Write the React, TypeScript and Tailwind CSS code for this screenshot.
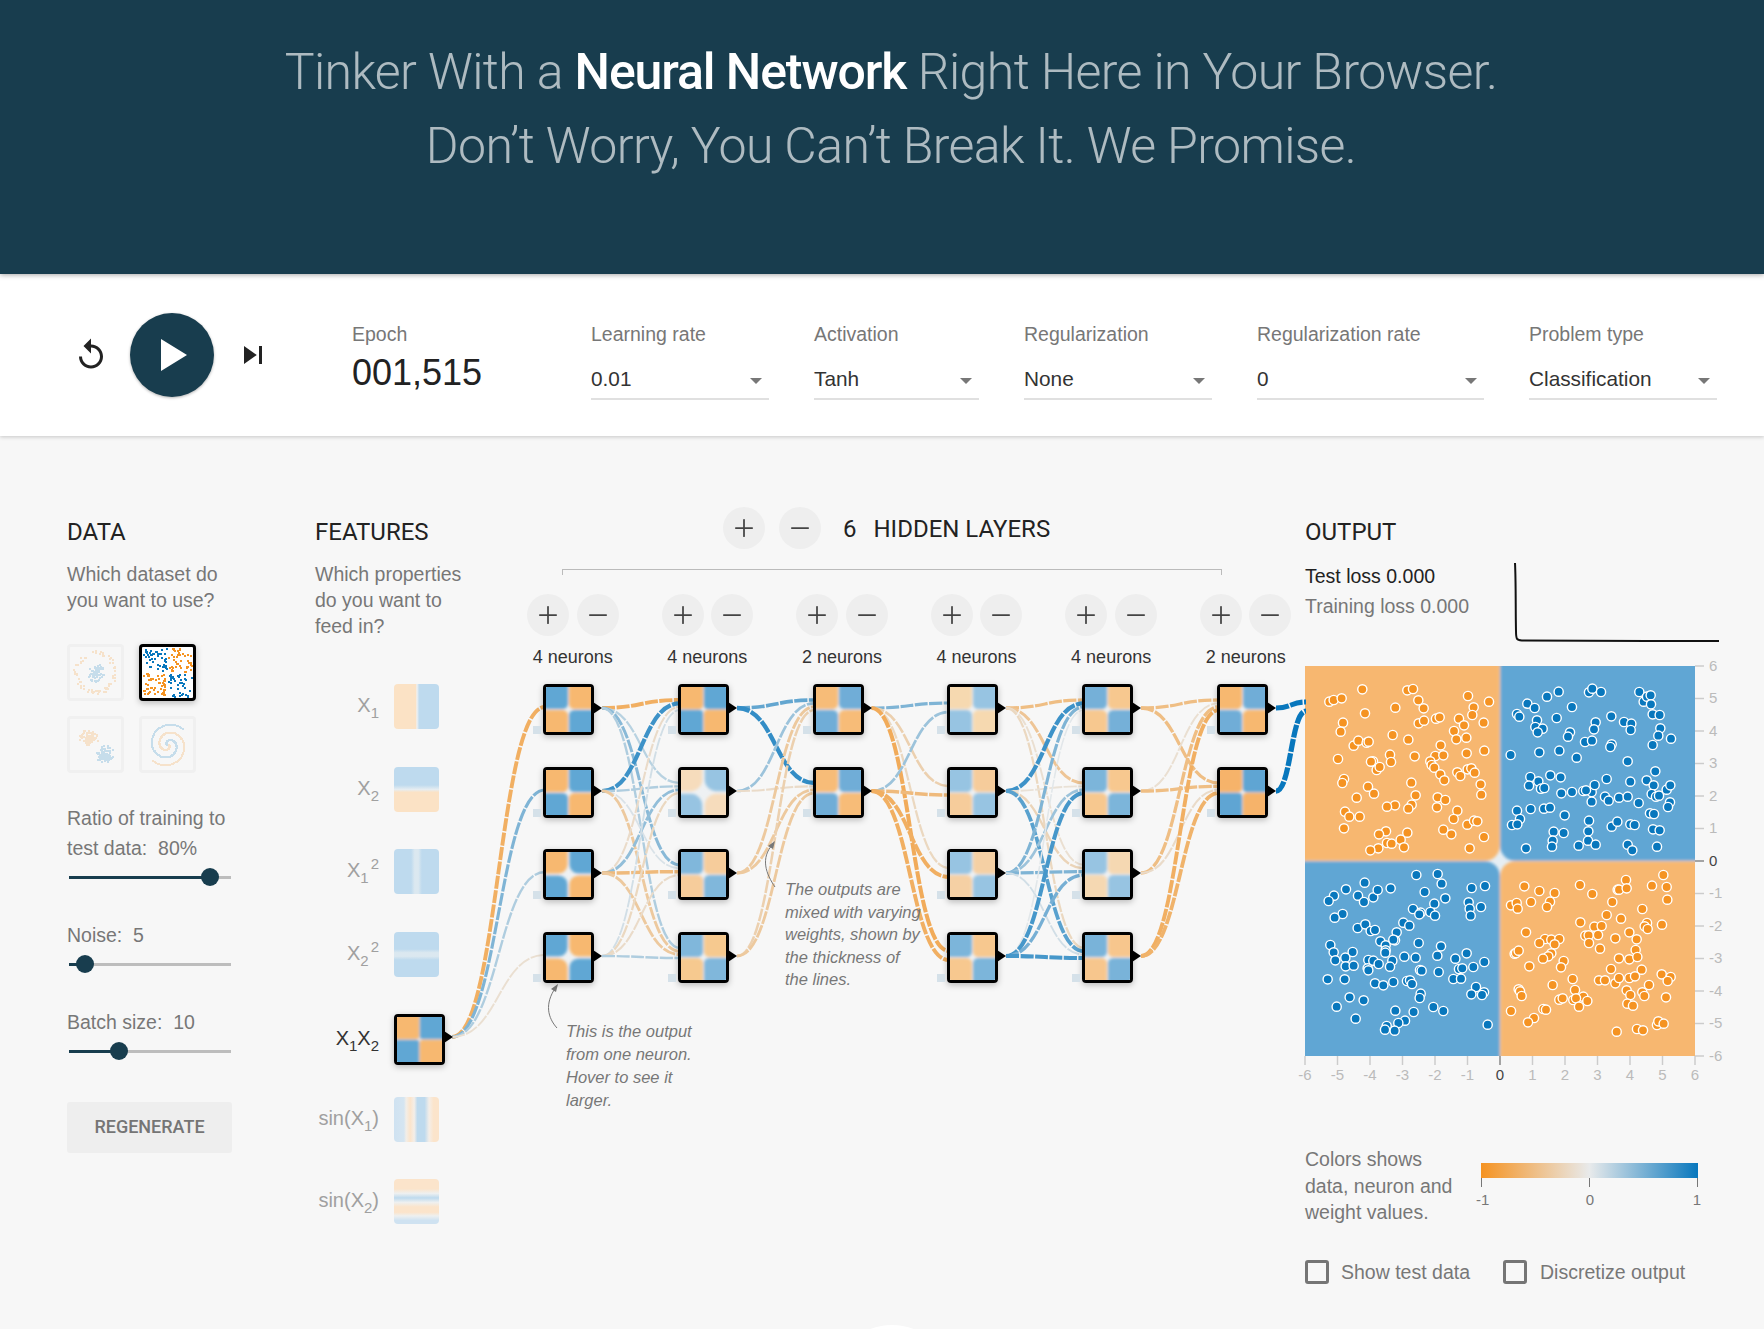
import { Plus, Minus } from 'lucide-react'

const ORANGE = '#f59322'
const BLUE = '#0877bd'
const PALE = '#e8eaeb'

const COL_X = [543, 678, 812.5, 947, 1082, 1217]
const ROW_Y = [684, 767, 849, 932]
const DIAGRAM_X = 315
const DIAGRAM_Y = 670

type Link = [number, number, number]

// signed weights read off the picture: minus is orange, plus is blue
const LINKS: Link[][] = [
  [[0, 0, -0.8], [0, 1, 0.25], [0, 2, 0.5], [0, 3, 0.3], [1, 0, 0.9], [1, 1, 0.3], [1, 2, 0.08], [1, 3, -0.45], [2, 0, -0.2], [2, 1, 0.45], [2, 2, -0.65], [2, 3, -0.45], [3, 0, 0.12], [3, 1, -0.25], [3, 2, -0.2], [3, 3, 0.3]],
  [[0, 0, 0.7], [0, 1, 0.95], [1, 0, 0.4], [1, 1, -0.2], [2, 0, -0.45], [2, 1, -0.45], [3, 0, -0.35], [3, 1, -0.45]],
  [[0, 0, 0.55], [0, 1, -0.35], [0, 2, -0.25], [0, 3, -0.85], [1, 0, 0.4], [1, 1, -0.65], [1, 2, -0.8], [1, 3, -0.8]],
  [[0, 0, -0.6], [0, 1, -0.5], [0, 2, -0.15], [0, 3, -0.25], [1, 0, 0.9], [1, 1, -0.12], [1, 2, -0.3], [1, 3, 0.75], [2, 0, 0.55], [2, 1, 0.4], [2, 2, 0.55], [2, 3, 0.12], [3, 0, 0.03], [3, 1, 0.85], [3, 2, 0.6], [3, 3, 0.85]],
  [[0, 0, -0.6], [0, 1, -0.6], [1, 0, -0.15], [1, 1, -0.6], [2, 0, -0.6], [2, 1, -0.2], [3, 0, -0.8], [3, 1, -0.75]],
]

const INPUT_LINKS = [-0.8, 0.55, 0.3, -0.15]

// first and second quadrant colour of every neuron, column by column
const NEURONS: [string, string, number][][] = [
  [['#61a7d4', '#f7b86f', 1.5], ['#f7b86f', '#61a7d4', 1.5], ['#f7b86f', '#61a7d4', 3], ['#61a7d4', '#f7b86f', 3]],
  [['#f7b86f', '#61a7d4', 1], ['#f6dcbc', '#97c4e2', 4], ['#80b7db', '#f6cc9b', 1.5], ['#80b7db', '#f6c98f', 1.5]],
  [['#f7bc78', '#6fadd7', 1.5], ['#f7bc78', '#6fadd7', 1.5]],
  [['#f6d9b0', '#97c4e2', 1.5], ['#97c4e2', '#f6cc9b', 1.5], ['#97c4e2', '#f5d0a4', 1.5], ['#7cb5da', '#f7c88f', 1.5]],
  [['#74b0d8', '#f7c88f', 1.5], ['#7cb5da', '#f7c88f', 1.5], ['#97c4e2', '#f5d8b2', 1.5], ['#79b3d9', '#f7c68d', 1.5]],
  [['#f7b86f', '#6fadd7', 1.5], ['#f6b36b', '#5fa5d3', 1]],
]

const LAYER_SIZES = ['4 neurons', '4 neurons', '2 neurons', '4 neurons', '4 neurons', '2 neurons']

const SELECTS = [
  { label: 'Learning rate', value: '0.01', width: 'w-[178px]' },
  { label: 'Activation', value: 'Tanh', width: 'w-[165px]' },
  { label: 'Regularization', value: 'None', width: 'w-[188px]' },
  { label: 'Regularization rate', value: '0', width: 'w-[227px]' },
  { label: 'Problem type', value: 'Classification', width: 'w-[188px]' },
]

// dots of the output plot, one list per quadrant, measured in 3x crop pixels of that quadrant
const DOTS_TL = [[148,605],[161,600],[185,595],[247,568],[255,640],[189,668],[182,695],[346,623],[382,571],[399,567],[415,601],[431,625],[416,670],[432,662],[468,656],[479,652],[564,588],[581,622],[627,605],[577,645],[537,656],[552,676],[611,668],[522,693],[529,718],[559,713],[338,705],[385,719],[221,737],[235,722],[260,728],[266,725],[482,736],[174,777],[279,784],[273,785],[330,764],[333,786],[404,769],[466,768],[490,766],[451,784],[455,795],[463,803],[560,760],[613,752],[532,817],[541,828],[563,808],[574,805],[584,818],[290,810],[299,801],[192,837],[187,849],[481,823],[493,841],[394,848],[264,860],[282,881],[602,853],[604,884],[230,893],[407,886],[473,892],[496,900],[345,916],[321,920],[395,914],[385,926],[471,922],[195,935],[208,950],[239,950],[532,932],[521,957],[562,974],[582,962],[592,964],[192,985],[490,989],[514,1003],[612,1011],[382,998],[318,994],[297,1003],[362,1019],[321,1029],[335,1031],[372,1042],[295,1045],[271,1051],[569,1045]]
const DOTS_TR = [[711,642],[718,650],[742,611],[764,624],[801,590],[836,575],[876,621],[830,654],[771,661],[766,681],[788,686],[773,697],[870,697],[864,710],[947,667],[942,688],[915,726],[936,722],[927,577],[937,566],[963,576],[994,649],[1032,666],[1054,671],[1052,690],[1078,576],[1091,605],[1101,590],[1112,586],[1113,613],[1118,643],[1139,645],[1141,685],[1135,707],[1173,716],[1118,735],[995,733],[991,741],[692,765],[778,757],[838,752],[890,773],[1043,784],[1126,814],[751,831],[811,826],[842,832],[747,857],[775,844],[783,866],[793,864],[844,880],[876,876],[910,873],[935,876],[944,855],[918,871],[980,837],[1051,845],[1100,841],[1121,856],[1115,882],[1128,890],[1137,887],[1160,869],[1171,856],[975,890],[986,902],[1017,893],[1043,890],[1076,909],[935,905],[1170,907],[1164,921],[711,932],[752,927],[792,926],[810,923],[854,946],[720,957],[696,975],[712,973],[927,962],[995,980],[1012,965],[1051,973],[1064,975],[1110,940],[1122,942],[1119,988],[1139,991],[821,995],[851,999],[925,994],[818,1022],[816,1040],[924,1022],[947,1034],[896,1037],[738,1045],[1043,1034],[1057,1051],[1131,1040]]
const DOTS_BL = [[334,42],[398,39],[410,68],[179,65],[123,85],[87,104],[71,120],[159,104],[177,123],[205,109],[218,87],[257,82],[359,93],[421,112],[500,81],[540,75],[491,124],[494,143],[528,138],[497,164],[388,128],[324,144],[347,155],[343,160],[376,153],[390,164],[113,159],[89,170],[158,201],[181,190],[197,210],[210,207],[295,185],[313,194],[275,214],[226,241],[270,238],[265,236],[341,246],[76,252],[86,274],[143,273],[242,253],[242,268],[241,275],[408,256],[485,277],[91,298],[121,290],[122,316],[146,314],[190,297],[205,299],[188,322],[190,328],[221,309],[262,299],[255,317],[298,287],[332,290],[397,284],[451,293],[538,303],[505,318],[462,324],[472,322],[345,327],[350,329],[401,333],[68,355],[119,355],[210,367],[235,373],[265,363],[306,360],[315,358],[321,369],[445,354],[468,353],[513,378],[537,394],[499,400],[531,402],[134,409],[176,418],[347,398],[344,411],[95,437],[271,449],[326,453],[385,438],[415,450],[152,473],[300,479],[280,486],[245,495],[240,506],[269,509],[548,491]]
const DOTS_BR = [[73,76],[118,90],[164,96],[240,72],[277,99],[378,57],[490,42],[456,74],[500,78],[353,86],[357,86],[380,82],[502,116],[337,123],[93,123],[150,122],[141,138],[33,133],[50,126],[53,143],[427,144],[320,162],[363,173],[241,184],[283,197],[305,195],[441,186],[434,196],[443,204],[486,191],[78,214],[388,214],[256,224],[266,223],[294,222],[346,232],[410,235],[135,234],[154,236],[178,234],[118,246],[164,250],[267,246],[300,263],[407,267],[44,278],[48,276],[56,269],[154,277],[145,286],[129,293],[357,292],[388,295],[412,288],[191,300],[183,319],[88,316],[333,324],[425,326],[485,340],[512,348],[503,360],[218,354],[297,358],[315,358],[346,367],[357,351],[388,351],[405,346],[447,372],[158,372],[56,385],[60,391],[65,405],[225,387],[380,388],[427,394],[391,402],[433,405],[498,409],[178,416],[188,412],[220,417],[250,407],[228,412],[262,420],[237,437],[382,428],[399,434],[33,450],[130,444],[138,446],[102,471],[84,484],[471,492],[475,481],[491,488],[350,512],[411,504],[429,508]]

function mix(a: string, b: string, t: number) {
  const ch = (c: string, i: number) => parseInt(c.slice(1 + i * 2, 3 + i * 2), 16)
  const v = [0, 1, 2].map((i) => Math.round(ch(a, i) + (ch(b, i) - ch(a, i)) * t))
  return `rgb(${v[0]},${v[1]},${v[2]})`
}

function rng(seed: number) {
  let s = seed
  return () => {
    s = (s + 0x6d2b79f5) | 0
    let t = Math.imul(s ^ (s >>> 15), 1 | s)
    t = (t + Math.imul(t ^ (t >>> 7), 61 | t)) ^ t
    return ((t ^ (t >>> 14)) >>> 0) / 4294967296
  }
}

function Wire({ sx, sy, tx, ty, w }: { sx: number; sy: number; tx: number; ty: number; w: number }) {
  const mx = (sx + tx) / 2
  return (
    <path
      d={`M${sx} ${sy}C${mx} ${sy} ${mx} ${ty} ${tx} ${ty}`}
      fill="none"
      stroke={mix(PALE, w < 0 ? ORANGE : BLUE, Math.min(1, Math.abs(w) * 0.85))}
      strokeWidth={1.5 + Math.abs(w) * 3}
      strokeDasharray="13 1.5"
    />
  )
}

function Heat({ a, b, spread = 1.5 }: { a: string; b: string; spread?: number }) {
  const size = 44
  const c = size / 2
  const gap = spread * 0.3
  const rx = 1.5 + spread * 2.5
  return (
    <svg viewBox={`0 0 ${size} ${size}`} className="block w-full h-full">
      <rect width={size} height={size} fill="#eef1f3" />
      <g filter="url(#soft)">
        <rect x={-size} y={-size} width={size + c - gap} height={size + c - gap} rx={rx} fill={a} />
        <rect x={c + gap} y={-size} width={size} height={size + c - gap} rx={rx} fill={b} />
        <rect x={-size} y={c + gap} width={size + c - gap} height={size} rx={rx} fill={b} />
        <rect x={c + gap} y={c + gap} width={size} height={size} rx={rx} fill={a} />
      </g>
    </svg>
  )
}

function Neuron({ x, y, a, b, spread }: { x: number; y: number; a: string; b: string; spread: number }) {
  return (
    <div className="absolute" style={{ left: x - DIAGRAM_X, top: y - DIAGRAM_Y }}>
      <div className="absolute left-[-10px] top-[42px] w-[8px] h-[8px] bg-[#d5e1e9]" />
      <div className="w-[51px] h-[51px] border-[3px] border-black rounded-[4px] overflow-hidden shadow-[0_2px_6px_rgba(0,0,0,0.25)]">
        <Heat a={a} b={b} spread={spread} />
      </div>
      <div className="absolute left-[50px] top-[18px] w-0 h-0 border-y-[6px] border-y-transparent border-l-[9px] border-l-black" />
    </div>
  )
}

function PointSquares({ seed, kind, opacity }: { seed: number; kind: 'circle' | 'xor' | 'gauss' | 'spiral'; opacity: number }) {
  const r = rng(seed)
  const pts: [number, number, string][] = []
  if (kind === 'xor') {
    for (let i = 0; i < 200; i++) {
      const x = r() * 48 + 1
      const y = r() * 48 + 1
      if (Math.abs(x - 25) < 1 || Math.abs(y - 25) < 1) continue
      pts.push([x, y, x < 25 === y < 25 ? BLUE : ORANGE])
    }
  }
  if (kind === 'circle') {
    for (let i = 0; i < 70; i++) {
      const t = r() * 6.28
      const d = r() * 9
      pts.push([25 + Math.cos(t) * d, 25 + Math.sin(t) * d, BLUE])
      const t2 = r() * 6.28
      const d2 = 17 + r() * 5
      pts.push([25 + Math.cos(t2) * d2, 25 + Math.sin(t2) * d2, ORANGE])
    }
  }
  if (kind === 'gauss') {
    for (let i = 0; i < 90; i++) {
      const g = () => (r() + r() + r() - 1.5) * 7
      pts.push([18 + g(), 18 + g(), ORANGE])
      pts.push([34 + g(), 35 + g(), BLUE])
    }
  }
  if (kind === 'spiral') {
    for (let i = 0; i < 110; i++) {
      const t = (i / 110) * 8.4
      const d = (i / 110) * 21 + 1
      pts.push([25 + Math.cos(t + 3.4) * d, 25 + Math.sin(t + 3.4) * d, BLUE])
      pts.push([25 - Math.cos(t + 3.4) * d, 25 - Math.sin(t + 3.4) * d, ORANGE])
    }
  }
  return (
    <svg viewBox="0 0 51 51" className="block w-full h-full" style={{ opacity }}>
      {pts.map(([x, y, c], i) => (
        <rect key={i} x={Math.round(x)} y={Math.round(y)} width={2} height={2} fill={c} />
      ))}
    </svg>
  )
}

function Slider({ label, at, fillTo }: { label: React.ReactNode; at: number; fillTo: number }) {
  return (
    <div>
      <p className="text-[19.5px] leading-[30px] text-[#777]">{label}</p>
      <div className="relative mt-[5px] ml-[2px] w-[162px] h-[18px]">
        <div className="absolute left-0 right-0 top-[7.5px] h-[3px] bg-[#bdbdbd]" />
        <div className="absolute left-0 top-[7.5px] h-[3px] bg-[#183d4e]" style={{ width: fillTo }} />
        <div className="absolute top-0 w-[18px] h-[18px] rounded-full bg-[#183d4e]" style={{ left: at - 9 }} />
      </div>
    </div>
  )
}

function RoundButton({ minus }: { minus?: boolean }) {
  return (
    <div className="w-[42px] h-[42px] rounded-full bg-[#eeeeee] flex items-center justify-center text-[#444]">
      {minus ? <Minus size={28} strokeWidth={1.5} /> : <Plus size={28} strokeWidth={1.5} />}
    </div>
  )
}

function Select({ label, value, width }: { label: string; value: string; width: string }) {
  return (
    <div className={width}>
      <p className="text-[19.5px] leading-[26px] text-[#777]">{label}</p>
      <div className="relative pt-[19px] pb-[6px] border-b-2 border-[#e0e0e0] text-[20.8px] leading-[26px] text-[#333]">
        {value}
        <div className="absolute right-[7px] top-[31px] w-0 h-0 border-x-[6px] border-x-transparent border-t-[6px] border-t-[#777]" />
      </div>
    </div>
  )
}

function Toolbar() {
  return (
    <div className="relative z-10 h-[162px] bg-white shadow-[0_1px_4px_rgba(0,0,0,0.2)] flex pl-[73px] pt-[47px]">
      <div className="flex items-center h-[68px] gap-[21px]">
        <svg viewBox="0 0 24 24" className="w-[36px] h-[36px] fill-[#222]">
          <path d="M12 5V1L7 6l5 5V7c3.31 0 6 2.69 6 6s-2.69 6-6 6-6-2.69-6-6H4c0 4.42 3.58 8 8 8s8-3.58 8-8-3.58-8-8-8z" />
        </svg>
        <div className="w-[84px] h-[84px] rounded-full bg-[#183d4e] shadow-[0_1px_3px_rgba(0,0,0,0.3)] flex items-center justify-center">
          <svg viewBox="0 0 26 32" className="w-[26px] h-[32px] ml-[3px] fill-white">
            <path d="M0 0L26 16L0 32z" />
          </svg>
        </div>
        <svg viewBox="0 0 24 24" className="w-[36px] h-[36px] fill-[#222]">
          <path d="M6 18l8.5-6L6 6v12zM16 6v12h2V6h-2z" />
        </svg>
      </div>
      <div className="ml-[81px] w-[194px]">
        <p className="text-[19.5px] leading-[26px] text-[#777]">Epoch</p>
        <p className="mt-[5px] text-[36px] leading-[42px] text-[#222]">001,515</p>
      </div>
      <div className="ml-[45px] flex gap-[45px]">
        {SELECTS.map((s) => (
          <Select key={s.label} {...s} />
        ))}
      </div>
    </div>
  )
}

function DataColumn() {
  const thumbs = ['circle', 'xor', 'gauss', 'spiral'] as const
  return (
    <div className="w-[248px] pt-[81px] pr-[16px]">
      <h4 className="font-[Roboto] text-[24px] leading-[30px] text-[#222]">DATA</h4>
      <p className="mt-[14px] text-[19.5px] leading-[26px] text-[#777]">Which dataset do<br />you want to use?</p>
      <div className="mt-[31px] grid grid-cols-[57px_57px] gap-x-[15px] gap-y-[15px]">
        {thumbs.map((k, i) =>
          k === 'xor' ? (
            <div key={k} className="w-[57px] h-[57px] border-[3px] border-black rounded-[4px] bg-white shadow-[0_2px_6px_rgba(0,0,0,0.25)]">
              <PointSquares seed={11} kind={k} opacity={1} />
            </div>
          ) : (
            <div key={k} className="w-[57px] h-[57px] border-[3px] border-[#f0f0f0] rounded-[4px]">
              <PointSquares seed={20 + i} kind={k} opacity={0.2} />
            </div>
          ),
        )}
      </div>
      <div className="mt-[30px]">
        <Slider label={<>Ratio of training to<br />test data:&nbsp; 80%</>} at={141} fillTo={141} />
      </div>
      <div className="mt-[34px]">
        <Slider label="Noise:&nbsp; 5" at={16} fillTo={16} />
      </div>
      <div className="mt-[34px]">
        <Slider label="Batch size:&nbsp; 10" at={50} fillTo={50} />
      </div>
      <button className="mt-[42px] w-[165px] h-[51px] pb-[2px] rounded-[3px] bg-[#eeeeee] font-[Roboto] text-[18px] font-medium text-[#757575]">
        REGENERATE
      </button>
    </div>
  )
}

function FeatureLabel({ name, active }: { name: React.ReactNode; active?: boolean }) {
  return <span className={`mb-[4px] text-[20px] leading-none whitespace-nowrap ${active ? 'text-[#333]' : 'text-[#a0a0a0]'}`}>{name}</span>
}

const Sub = ({ n }: { n: number }) => <sub className="bottom-[-6px] text-[15px]">{n}</sub>
const Sup = ({ n }: { n: number }) => <sup className="text-[15px] ml-[2px]">{n}</sup>

const FEATURES = [
  { y: 684, name: <>X<Sub n={1} /></>, bg: 'bg-[linear-gradient(90deg,#fbe2c5_48%,#eef1f3_51%,#bedaee_56%)]' },
  { y: 767, name: <>X<Sub n={2} /></>, bg: 'bg-[linear-gradient(180deg,#bedaee_40%,#e6edf1_50%,#fbe2c5_56%)]' },
  { y: 849, name: <>X<Sub n={1} /><Sup n={2} /></>, bg: 'bg-[linear-gradient(90deg,#bedaee_38%,#dbe8f0_46%,#dbe8f0_54%,#bedaee_62%)]' },
  { y: 932, name: <>X<Sub n={2} /><Sup n={2} /></>, bg: 'bg-[linear-gradient(180deg,#bedaee_38%,#dbe8f0_46%,#dbe8f0_54%,#bedaee_62%)]' },
  { y: 1097, name: <>sin(X<Sub n={1} />)</>, bg: 'bg-[linear-gradient(90deg,#cfe2f1_0%,#d5e5f1_22%,#f2eee8_27%,#fbe4cb_36%,#f4eee8_45%,#bedaee_52%,#bedaee_68%,#f4eee8_78%,#fbe4cb_88%,#fbe4cb_100%)]' },
  { y: 1179, name: <>sin(X<Sub n={2} />)</>, bg: 'bg-[linear-gradient(180deg,#fbe4cb_0%,#fbe4cb_22%,#eef0f0_32%,#bedaee_42%,#eef0f0_52%,#fbe4cb_62%,#fbe4cb_74%,#eef0f0_82%,#cfe2f1_92%,#cfe2f1_100%)]' },
]

function Diagram() {
  const wires: React.ReactNode[] = []
  INPUT_LINKS.forEach((w, i) => {
    wires.push(<Wire key={`i${i}`} sx={452} sy={1037} tx={COL_X[0] + 2} ty={ROW_Y[i] + 23} w={w} />)
  })
  LINKS.forEach((gap, g) => {
    const sources = NEURONS[g].length
    gap.forEach(([from, to, w], i) => {
      const sy = ROW_Y[from] + 24
      const ty = ROW_Y[to] + (sources === 4 ? 16 + from * (10 / 3) : 19 + from * 9)
      wires.push(<Wire key={`${g}-${i}`} sx={COL_X[g] + 59} sy={sy} tx={COL_X[g + 1] + 2} ty={ty} w={w} />)
    })
  })

  return (
    <div className="relative h-[640px]">
      <svg viewBox={`${DIAGRAM_X} ${DIAGRAM_Y} 990 640`} className="absolute inset-0 w-[990px] h-[640px] overflow-visible">
        {wires}
        <Wire sx={COL_X[5] + 59} sy={708} tx={1306} ty={702} w={1.2} />
        <Wire sx={COL_X[5] + 59} sy={791} tx={1306} ty={711} w={1.25} />
        {/* callout arrows */}
        <g fill="none" stroke="#777" strokeWidth="1">
          <path d="M557 1028C548 1018 544 1004 556 987" />
          <path d="M775 887C766 874 760 858 773 844" />
        </g>
        <path d="M558 984L551 989L556 992z" fill="#777" />
        <path d="M775 841L768 846L773 849z" fill="#777" />
      </svg>

      {FEATURES.map((f, i) => (
        <div key={i} className="absolute left-0 flex items-center h-[45px]" style={{ top: f.y - DIAGRAM_Y }}>
          <div className="w-[64px] flex justify-end">
            <FeatureLabel name={f.name} />
          </div>
          <div className={`ml-[15px] w-[45px] h-[45px] rounded-[4px] ${f.bg}`} />
        </div>
      ))}
      <div className="absolute left-0 top-[344px] flex items-center">
        <div className="w-[64px] flex justify-end">
          <FeatureLabel name={<>X<Sub n={1} />X<Sub n={2} /></>} active />
        </div>
        <div className="relative ml-[15px]">
          <div className="w-[51px] h-[51px] border-[3px] border-black rounded-[4px] overflow-hidden shadow-[0_2px_6px_rgba(0,0,0,0.25)]">
            <Heat a="#f7b86f" b="#61a7d4" spread={0.6} />
          </div>
          <div className="absolute left-[50px] top-[17px] w-0 h-0 border-y-[6px] border-y-transparent border-l-[9px] border-l-black" />
        </div>
      </div>

      {NEURONS.map((col, c) =>
        col.map(([a, b, spread], r) => <Neuron key={`${c}-${r}`} x={COL_X[c]} y={ROW_Y[r]} a={a} b={b} spread={spread} />),
      )}

      <p className="absolute left-[251px] top-[350px] text-[16.5px] leading-[23px] italic text-[#777]">
        This is the output<br />from one neuron.<br />Hover to see it<br />larger.
      </p>
      <p className="absolute left-[470px] top-[208px] text-[16.5px] leading-[22.5px] italic text-[#777] whitespace-nowrap">
        The outputs are<br />mixed with varying<br />weights, shown by<br />the thickness of<br />the lines.
      </p>
    </div>
  )
}

function CenterColumn() {
  return (
    <div className="w-[990px]">
      <div className="h-[234px] pt-[71px] flex">
        <div className="w-[208px] pt-[10px]">
          <h4 className="font-[Roboto] text-[24px] leading-[30px] text-[#222]">FEATURES</h4>
          <p className="mt-[14px] text-[19.5px] leading-[26px] text-[#777]">Which properties<br />do you want to<br />feed in?</p>
        </div>
        <div className="w-[782px]">
          <div className="flex items-center h-[42px] pl-[200px] gap-[14px] font-[Roboto]">
            <RoundButton />
            <RoundButton minus />
            <span className="ml-[8px] mt-[2px] text-[24px] text-[#222]">6</span>
            <span className="ml-[3px] mt-[2px] text-[24px] text-[#222]">HIDDEN LAYERS</span>
          </div>
          <div className="mt-[20px] ml-[39px] w-[660px] h-[6px] border-t border-x border-[#bbb]" />
          <div className="mt-[19px] ml-[4px] flex gap-[43.1px]">
            {LAYER_SIZES.map((s, i) => (
              <div key={i} className="w-[91.5px] flex flex-col items-center">
                <div className="flex gap-[7.5px]">
                  <RoundButton />
                  <RoundButton minus />
                </div>
                <p className="mt-[8px] text-[18px] leading-[26px] text-[#333] whitespace-nowrap">{s}</p>
              </div>
            ))}
          </div>
        </div>
      </div>
      <Diagram />
    </div>
  )
}

function OutputPlot() {
  const size = 390
  const scale = size / 12
  const ticks = [-6, -5, -4, -3, -2, -1, 0, 1, 2, 3, 4, 5, 6]
  const quarter = (list: number[][], c: string, dx: number, dy: number) =>
    list.map(([x, y]) => [x / 3 + dx, y / 3 + dy, c] as [number, number, string])
  const pts = [
    ...quarter(DOTS_TL, ORANGE, -25, -166),
    ...quarter(DOTS_TR, BLUE, -25, -166),
    ...quarter(DOTS_BL, BLUE, 0, 195),
    ...quarter(DOTS_BR, ORANGE, 195, 195),
  ]
  const rx = 15
  return (
    <svg width={440} height={420} viewBox="0 0 440 420" className="block overflow-visible">
      <svg width={size} height={size} viewBox={`0 0 ${size} ${size}`}>
        <rect width={size} height={size} fill="#e6eef3" />
        <g filter="url(#fine)">
          <rect x={-size} y={-size} width={size + 194.8} height={size + 194.8} rx={rx} fill="#f7b76f" />
          <rect x={195.2} y={-size} width={size + 194.8} height={size + 194.8} rx={rx} fill="#61a6d4" />
          <rect x={-size} y={195.2} width={size + 194.8} height={size + 194.8} rx={rx} fill="#61a6d4" />
          <rect x={195.2} y={195.2} width={size + 194.8} height={size + 194.8} rx={rx} fill="#f7b76f" />
        </g>
        {pts.map(([x, y, c], i) => (
          <circle key={i} cx={x} cy={y} r={4.6} fill={c} stroke="#fff" strokeWidth={1.4} />
        ))}
      </svg>
      {ticks.map((t) => {
        const y = (6 - t) * scale
        const x = (t + 6) * scale
        const c = t === 0 ? '#888' : '#ccc'
        const tc = t === 0 ? '#444' : '#bbb'
        return (
          <g key={t}>
            <path d={`M${size} ${y}h9`} stroke={c} strokeWidth="1.5" />
            <text x={size + 14} y={y + 4.5} fontSize="15" fill={tc}>{t}</text>
            <path d={`M${x} ${size}v9`} stroke={c} strokeWidth="1.5" />
            <text x={x} y={size + 24} fontSize="15" fill={tc} textAnchor="middle">{t}</text>
          </g>
        )
      })}
    </svg>
  )
}

function OutputColumn() {
  return (
    <div className="w-[459px] pt-[81px]">
      <h4 className="font-[Roboto] text-[24px] leading-[30px] text-[#222]">OUTPUT</h4>
      <div className="mt-[14px] h-[105px] flex">
        <div className="w-[209px]">
          <p className="text-[19.5px] leading-[30px] text-[#222]">Test loss 0.000</p>
          <p className="text-[19.5px] leading-[30px] text-[#777]">Training loss 0.000</p>
        </div>
        <svg width="206" height="86" viewBox="0 0 206 86" className="mt-[2px]">
          <path d="M1 0C2 20 1.5 45 2 68C2 77 3 77 8 77.5C60 78 140 78 205 78" fill="none" stroke="#111" strokeWidth="2" />
        </svg>
      </div>
      <OutputPlot />
      <div className="mt-[60px] flex">
        <p className="w-[176px] text-[19.5px] leading-[26.5px] text-[#777]">Colors shows<br />data, neuron and<br />weight values.</p>
        <div className="w-[217px] mt-[17px] relative">
          <div className="h-[15px] bg-[linear-gradient(90deg,#f59322,#e8eaeb_50%,#0877bd)]" />
          <div className="flex justify-between">
            <div className="w-px h-[9px] bg-[#777]" />
            <div className="w-px h-[9px] bg-[#777]" />
            <div className="w-px h-[9px] bg-[#777]" />
          </div>
          <div className="mt-[4px] flex justify-between text-[15px] leading-[18px] text-[#777]">
            <span className="ml-[-5px]">-1</span>
            <span className="mr-[2px]">0</span>
            <span className="mr-[-3px]">1</span>
          </div>
        </div>
      </div>
      <div className="mt-[32px] flex items-center">
        <div className="w-[24px] h-[24px] rounded-[3px] border-[3px] border-[#757575]" />
        <span className="ml-[12px] w-[162px] text-[19.5px] text-[#777]">Show test data</span>
        <div className="w-[24px] h-[24px] rounded-[3px] border-[3px] border-[#757575]" />
        <span className="ml-[13px] text-[19.5px] text-[#777]">Discretize output</span>
      </div>
    </div>
  )
}

export default function App() {
  return (
    <div className="relative w-[1764px] h-[1329px] overflow-hidden bg-[#f7f7f7] font-['Liberation_Sans',sans-serif]">
      <svg className="absolute w-0 h-0">
        <defs>
          <filter id="soft" x="-10%" y="-10%" width="120%" height="120%">
            <feGaussianBlur stdDeviation="1.6" />
          </filter>
          <filter id="fine" x="-10%" y="-10%" width="120%" height="120%">
            <feGaussianBlur stdDeviation="1.5" />
          </filter>
        </defs>
      </svg>

      <header className="relative z-20 h-[274px] bg-[#183d4e] pt-[35px] pl-[18px] text-center font-[Roboto] text-[50px] leading-[74px] font-light tracking-[-0.6px] text-white/65 shadow-[0_1px_5px_rgba(0,0,0,0.35)]">
        <p>
          Tinker With a <b className="font-medium tracking-[-1.1px] text-white">Neural Network</b> Right Here in Your Browser.
        </p>
        <p>Don’t Worry, You Can’t Break It. We Promise.</p>
      </header>

      <Toolbar />

      <main className="flex pl-[67px]">
        <DataColumn />
        <CenterColumn />
        <OutputColumn />
      </main>

      {/* top of a round button peeking in at the bottom edge */}
      <div className="absolute left-[832px] top-[1325px] w-[120px] h-[120px] rounded-full bg-white" />
    </div>
  )
}
